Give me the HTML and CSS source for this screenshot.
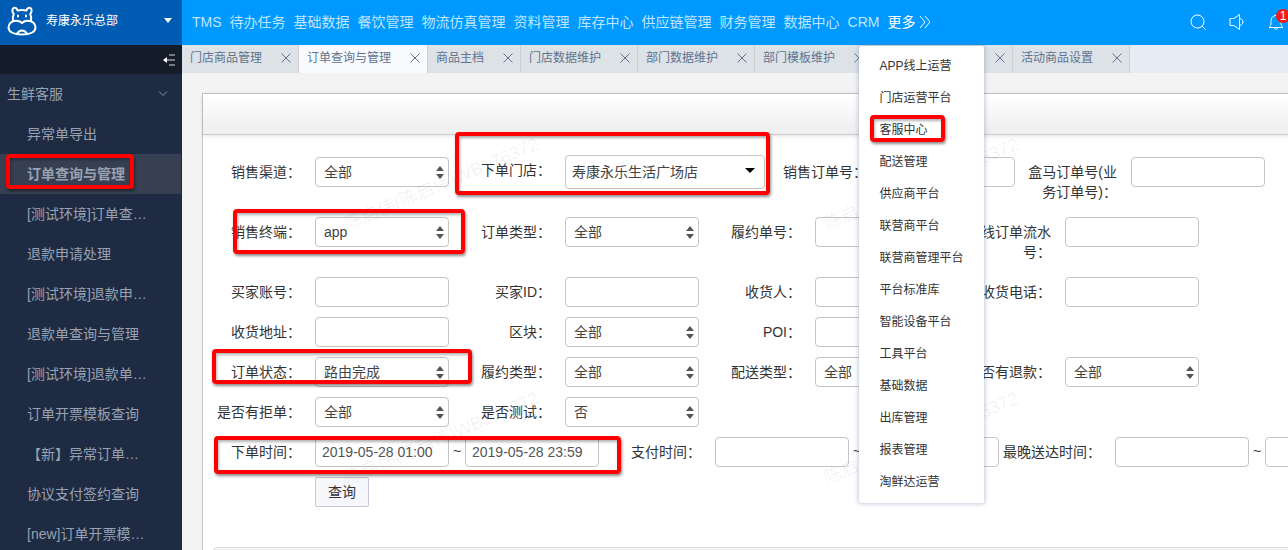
FILE: index.html
```html
<!DOCTYPE html>
<html lang="zh-CN">
<head>
    <meta charset="UTF-8">
    <meta name="viewport" content="width=device-width, initial-scale=1.0">
    <title>订单查询与管理</title>
    <link rel="stylesheet" href="styles.css">
</head>
<body>
    <header class="header">
        <button type="button" class="brand">
            <svg class="brand-logo" width="30" height="30" viewBox="0 0 30 30" fill="none" stroke="#fff" stroke-width="2" stroke-linecap="round" stroke-linejoin="round">
                <path d="M6 15c-.5-3-.3-5 .8-7C5 6.500 5 3 6.500 2c1.800-.8 3.500.3 4 2.500 3-.7 6-.7 9 0 .5-2.200 2.200-3.300 4-2.500C25 3 25 6.500 23.200 8c1.100 2 1.300 4 .8 7"/>
                <path d="M15 17c-1.500-1.500-3.500-2.200-6-2.200-4.500 0-7.500 3-7.500 6.700C1.500 26 7 28.500 15 28.500S28.500 26 28.500 21.500c0-3.700-3-6.700-7.500-6.700-2.500 0-4.500.7-6 2.200z"/>
                <path d="M10 27.500c1.500-2 3-3 5-3s3.500 1 5 3M11 9.500v1M19 9.500v1"/>
            </svg>
            <span class="brand-name">寿康永乐总部</span>
            <span class="brand-caret"></span>
        </button>
        <nav class="nav">
            <a href="#">TMS</a>
            <a href="#">待办任务</a>
            <a href="#">基础数据</a>
            <a href="#">餐饮管理</a>
            <a href="#">物流仿真管理</a>
            <a href="#">资料管理</a>
            <a href="#">库存中心</a>
            <a href="#">供应链管理</a>
            <a href="#">财务管理</a>
            <a href="#">数据中心</a>
            <a href="#">CRM</a>
            <div class="more">
                <a href="#" class="more-link">更多
                    <svg width="13" height="14" viewBox="0 0 13 14" fill="none" stroke="#fff" stroke-width="1"><path d="M1 1l5 6-5 6M6 1l5 6-5 6"/></svg>
                </a>
                <ul class="more-menu">
                    <li><a href="#">APP线上运营</a></li>
                    <li><a href="#">门店运营平台</a></li>
                    <li><a href="#">客服中心</a><span class="mark mark-service"></span></li>
                    <li><a href="#">配送管理</a></li>
                    <li><a href="#">供应商平台</a></li>
                    <li><a href="#">联营商平台</a></li>
                    <li><a href="#">联营商管理平台</a></li>
                    <li><a href="#">平台标准库</a></li>
                    <li><a href="#">智能设备平台</a></li>
                    <li><a href="#">工具平台</a></li>
                    <li><a href="#">基础数据</a></li>
                    <li><a href="#">出库管理</a></li>
                    <li><a href="#">报表管理</a></li>
                    <li><a href="#">淘鲜达运营</a></li>
                </ul>
            </div>
        </nav>
        <div class="tools">
            <button type="button" aria-label="搜索">
                <svg width="16" height="16" viewBox="0 0 16 16" fill="none" stroke="#fff" stroke-width="1"><circle cx="7.500" cy="7.500" r="6.500"/><path d="M12 12l3.500 3.500"/></svg>
            </button>
            <button type="button" aria-label="公告">
                <svg width="16" height="16" viewBox="0 0 16 16" fill="none" stroke="#fff" stroke-width="1" stroke-linejoin="round"><path d="M1 4.500h4l5.500-4v15l-5.500-4H1zM11 4.500c4 1.500 4 5.500 0 7"/></svg>
            </button>
            <button type="button" class="bell" aria-label="消息">
                <svg width="16" height="16" viewBox="0 0 16 16" fill="none" stroke="#fff" stroke-width="1" stroke-linejoin="round"><path d="M1 13.500h14c-1.500-1-2-2-2-6C13 4 11 1.500 8 1.500S3 4 3 7.500c0 4-.5 5-2 6zM6 13.500c.5 2.300 3.500 2.300 4 0"/></svg>
                <span class="badge">1</span>
            </button>
        </div>
    </header>

    <div class="layout">
        <aside class="sidebar">
            <button type="button" class="collapse" aria-label="收起菜单">
                <svg width="13" height="12" viewBox="0 0 13 12" fill="none" stroke="#d5d9e0" stroke-width="1.200"><path d="M6 1h6M3 6h9M6 11h6"/><path d="M4 3L0 6l4 3z" fill="#fff" stroke="none"/></svg>
            </button>
            <button type="button" class="group">生鲜客服
                <svg width="10" height="6" viewBox="0 0 10 6" fill="none" stroke="#8590a3" stroke-width="1"><path d="M1 .5l4 4 4-4"/></svg>
            </button>
            <ul class="menu">
                <li><a href="#">异常单导出</a></li>
                <li class="active"><a href="#">订单查询与管理</a><span class="mark mark-menu"></span></li>
                <li><a href="#">[测试环境]订单查…</a></li>
                <li><a href="#">退款申请处理</a></li>
                <li><a href="#">[测试环境]退款申…</a></li>
                <li><a href="#">退款单查询与管理</a></li>
                <li><a href="#">[测试环境]退款单…</a></li>
                <li><a href="#">订单开票模板查询</a></li>
                <li><a href="#">【新】异常订单…</a></li>
                <li><a href="#">协议支付签约查询</a></li>
                <li><a href="#">[new]订单开票模…</a></li>
            </ul>
        </aside>

        <main class="main">
            <svg class="defs" width="0" height="0"><symbol id="close" viewBox="0 0 12 12"><path d="M1.500 1.500l9 9M10.500 1.500l-9 9" fill="none" stroke="#5f7390" stroke-width="1"/></symbol></svg>
            <div class="tabs">
                <div class="tab"><a href="#">门店商品管理</a><button type="button" aria-label="关闭"><svg width="12" height="12"><use href="#close"/></svg></button></div>
                <div class="tab current"><a href="#">订单查询与管理</a><button type="button" aria-label="关闭"><svg width="12" height="12"><use href="#close"/></svg></button></div>
                <div class="tab"><a href="#">商品主档</a><button type="button" aria-label="关闭"><svg width="12" height="12"><use href="#close"/></svg></button></div>
                <div class="tab"><a href="#">门店数据维护</a><button type="button" aria-label="关闭"><svg width="12" height="12"><use href="#close"/></svg></button></div>
                <div class="tab"><a href="#">部门数据维护</a><button type="button" aria-label="关闭"><svg width="12" height="12"><use href="#close"/></svg></button></div>
                <div class="tab"><a href="#">部门模板维护</a><button type="button" aria-label="关闭"><svg width="12" height="12"><use href="#close"/></svg></button></div>
                <div class="tab tab-blank"><a href="#"></a><button type="button" aria-label="关闭"><svg width="12" height="12"><use href="#close"/></svg></button></div>
                <div class="tab"><a href="#">活动商品设置</a><button type="button" aria-label="关闭"><svg width="12" height="12"><use href="#close"/></svg></button></div>
            </div>

            <section class="panel">
                <div class="panel-head"></div>
                <form class="search">
                    <div class="row">
                        <div class="field">
                            <label for="channel">销售渠道：</label>
                            <div class="select"><select id="channel"><option>全部</option></select></div>
                        </div>
                        <div class="field field-store">
                            <label for="store">下单门店：</label>
                            <div class="combo"><select id="store"><option>寿康永乐生活广场店</option></select></div>
                            <span class="mark mark-store"></span>
                        </div>
                        <div class="field">
                            <label for="saleNo">销售订单号：</label>
                            <input type="text" id="saleNo">
                        </div>
                        <div class="field">
                            <label for="bizNo">盒马订单号(业务订单号)：</label>
                            <input type="text" id="bizNo">
                        </div>
                    </div>
                    <div class="row">
                        <div class="field">
                            <label for="terminal">销售终端：</label>
                            <div class="select"><select id="terminal"><option>app</option></select></div>
                            <span class="mark mark-terminal"></span>
                        </div>
                        <div class="field">
                            <label for="orderType">订单类型：</label>
                            <div class="select"><select id="orderType"><option>全部</option></select></div>
                        </div>
                        <div class="field">
                            <label for="fulfilNo">履约单号：</label>
                            <input type="text" id="fulfilNo">
                        </div>
                        <div class="field">
                            <label for="serialNo">离线订单流水号：</label>
                            <input type="text" id="serialNo">
                        </div>
                    </div>
                    <div class="row">
                        <div class="field">
                            <label for="buyer">买家账号：</label>
                            <input type="text" id="buyer">
                        </div>
                        <div class="field">
                            <label for="buyerId">买家ID：</label>
                            <input type="text" id="buyerId">
                        </div>
                        <div class="field">
                            <label for="receiver">收货人：</label>
                            <input type="text" id="receiver">
                        </div>
                        <div class="field">
                            <label for="phone">收货电话：</label>
                            <input type="text" id="phone">
                        </div>
                    </div>
                    <div class="row">
                        <div class="field">
                            <label for="address">收货地址：</label>
                            <input type="text" id="address">
                        </div>
                        <div class="field">
                            <label for="block">区块：</label>
                            <div class="select"><select id="block"><option>全部</option></select></div>
                        </div>
                        <div class="field">
                            <label for="poi">POI：</label>
                            <input type="text" id="poi">
                        </div>
                    </div>
                    <div class="row">
                        <div class="field">
                            <label for="status">订单状态：</label>
                            <div class="select"><select id="status"><option>路由完成</option></select></div>
                            <span class="mark mark-status"></span>
                        </div>
                        <div class="field">
                            <label for="fulfilType">履约类型：</label>
                            <div class="select"><select id="fulfilType"><option>全部</option></select></div>
                        </div>
                        <div class="field">
                            <label for="delivery">配送类型：</label>
                            <div class="select"><select id="delivery"><option>全部</option></select></div>
                        </div>
                        <div class="field">
                            <label for="refund">是否有退款：</label>
                            <div class="select"><select id="refund"><option>全部</option></select></div>
                        </div>
                    </div>
                    <div class="row">
                        <div class="field">
                            <label for="reject">是否有拒单：</label>
                            <div class="select"><select id="reject"><option>全部</option></select></div>
                        </div>
                        <div class="field">
                            <label for="test">是否测试：</label>
                            <div class="select"><select id="test"><option>否</option></select></div>
                        </div>
                    </div>
                    <div class="row">
                        <div class="field">
                            <label for="orderFrom">下单时间：</label>
                            <input type="text" id="orderFrom" value="2019-05-28 01:00">
                            <span class="to">~</span>
                            <input type="text" aria-label="下单时间止" value="2019-05-28 23:59">
                            <span class="mark mark-time"></span>
                        </div>
                        <div class="field">
                            <label for="payFrom">支付时间：</label>
                            <input type="text" id="payFrom">
                            <span class="to">~</span>
                            <input type="text" aria-label="支付时间止">
                        </div>
                        <div class="field">
                            <label for="arriveFrom">最晚送达时间：</label>
                            <input type="text" id="arriveFrom">
                            <span class="to">~</span>
                            <input type="text" aria-label="最晚送达时间止">
                        </div>
                    </div>
                    <div class="actions">
                        <button type="submit">查询</button>
                    </div>
                </form>
                <div class="result"></div>
                <div class="watermark" aria-hidden="true">
                    <span>陈启伟(陈启伟)WB176372</span>
                    <span>陈启伟(陈启伟)WB176372</span>
                    <span>陈启伟(陈启伟)WB176372</span>
                    <span>陈启伟(陈启伟)WB176372</span>
                </div>
            </section>
        </main>
    </div>
</body>
</html>
```
FILE: styles.css
```css
* {
    box-sizing: border-box;
}
body {
    display: flex;
    flex-direction: column;
    height: 100vh;
    margin: 0;
    overflow: hidden;
    background-color: #f3f3f3;
    color: #333;
    font-family: "Liberation Sans", "Noto Sans CJK SC", sans-serif;
    font-size: 14px;
    line-height: 20px;
}
button, input, select {
    margin: 0;
    font: inherit;
}
button {
    padding: 0;
    border: none;
    background: none;
    cursor: pointer;
}
a {
    color: inherit;
    text-decoration: none;
}
ul {
    margin: 0;
    padding: 0;
    list-style: none;
}
svg {
    display: block;
}

/* header */
.header {
    position: relative;
    z-index: 10;
    display: flex;
    flex: none;
    height: 45px;
    background-color: #09f;
}
.brand {
    display: flex;
    flex: none;
    align-items: center;
    width: 182px;
    padding: 0 10px 4px 7px;
    background-color: #005cb3;
    color: #fff;
    font-size: 12px;
}
.brand-name {
    margin-left: 9px;
}
.brand-caret {
    margin-left: auto;
    border: 4px solid transparent;
    border-top: 5px solid #fff;
    border-bottom: none;
}
.nav {
    display: flex;
    gap: 8px;
    padding-left: 10px;
    line-height: 44px;
    color: #bfe5ff;
    white-space: nowrap;
}
.more {
    position: relative;
}
.more-link {
    display: flex;
    align-items: center;
    gap: 4px;
    color: #fff;
}
.more-menu {
    position: absolute;
    top: 46px;
    left: -28px;
    width: 125px;
    padding: 4px 0 5px;
    border-radius: 2px;
    background-color: #fff;
    box-shadow: 0 0 4px 1px rgba(100, 125, 165, 0.4);
    color: #333;
    font-size: 12px;
    line-height: 32px;
}
.more-menu li {
    position: relative;
    padding-left: 20px;
}
.more-menu a {
    display: block;
}
.tools {
    display: flex;
    align-items: center;
    gap: 23px;
    margin-left: auto;
    padding: 0 4px 2px 0;
}
.bell {
    position: relative;
}
.badge {
    position: absolute;
    top: -5px;
    right: -6px;
    width: 14px;
    height: 14px;
    border-radius: 7px;
    background-color: #f21b0c;
    color: #fff;
    font-size: 12px;
    line-height: 14px;
    text-align: center;
}

.layout {
    display: flex;
    flex: 1;
    min-height: 0;
}

/* sidebar */
.sidebar {
    flex: none;
    width: 182px;
    overflow: hidden;
    background-color: #1e2b42;
    color: #98a2b3;
}
.collapse {
    display: flex;
    align-items: center;
    justify-content: flex-end;
    width: 100%;
    height: 29px;
    padding-right: 6px;
    background-color: #151d2b;
}
.group {
    display: flex;
    align-items: center;
    justify-content: space-between;
    width: 100%;
    height: 40px;
    padding: 0 14px 0 7px;
    color: inherit;
}
.menu li {
    position: relative;
    margin-right: 1px;
    padding-left: 27px;
    line-height: 40px;
    white-space: nowrap;
}
.menu a {
    display: block;
}
.menu .active {
    background-color: #364052;
    font-weight: bold;
}

/* tabs */
.main {
    flex: 1;
    min-width: 0;
    overflow: hidden;
}
.defs {
    position: absolute;
}
.tabs {
    display: flex;
    height: 28px;
    background-color: #e6ebf4;
}
.tab {
    display: flex;
    flex: none;
    align-items: center;
    gap: 18px;
    padding: 0 6px 2px 8px;
    border-right: 1px solid #cfcfd2;
    background-color: #dde2e6;
    color: #5f7390;
    font-size: 12px;
}
.tab.current {
    background-color: #f8fafd;
}
.tab-blank a {
    width: 96px;
}

/* search panel */
.panel {
    position: relative;
    min-width: 1300px;
    margin: 20px 0 0 20px;
    border: 1px solid #c4c4c4;
    background-color: #fff;
}
.panel-head {
    height: 41px;
    border-bottom: 1px solid #ccc;
    background: linear-gradient(#fff, #eee);
    box-shadow: 0 1px 4px rgba(0, 0, 0, 0.12);
}
.search {
    padding: 22px 0 40px;
}
.row {
    display: flex;
    gap: 4px;
    margin-bottom: 10px;
}
.field {
    position: relative;
    display: flex;
    flex: none;
    align-items: flex-start;
}
.field label {
    width: 112px;
    padding: 5px 14px 5px 0;
    text-align: right;
}
.field-store {
    margin-top: -2px;
}
.field input, .select, .combo {
    width: 134px;
    height: 30px;
    border: 1px solid #c4c4c4;
    border-radius: 4px;
    background-color: #fff;
    color: #555;
}
.field input {
    padding: 0 6px;
}
.select, .combo {
    position: relative;
}
.combo {
    width: 200px;
    height: 34px;
}
.field select {
    width: 100%;
    height: 100%;
    padding: 0 8px;
    border: none;
    background: none;
    color: #444;
    appearance: none;
}
.combo select {
    padding: 0 6px;
}
.select::before, .select::after, .combo::after {
    content: "";
    position: absolute;
    right: 4px;
    border: 4px solid transparent;
    pointer-events: none;
}
.select::before {
    top: 8px;
    border-top: none;
    border-bottom: 5px solid #555;
}
.select::after {
    bottom: 7px;
    border-bottom: none;
    border-top: 5px solid #555;
}
.combo::after {
    top: 12px;
    right: 9px;
    border: 5px solid transparent;
    border-top-color: #000;
    border-bottom: none;
}
.to {
    width: 16px;
    padding-top: 4px;
    text-align: center;
}
.actions {
    padding-left: 112px;
}
.actions button {
    display: block;
    width: 54px;
    height: 30px;
    border: 1px solid #c5c7dc;
    border-radius: 2px;
    background-color: #f6f7fb;
    color: #333;
}
.result {
    height: 200px;
    margin-left: 10px;
    border: 1px solid #ddd;
    border-radius: 4px;
    background-color: #f5f5f5;
}

/* user name repeated over the page */
.watermark {
    position: absolute;
    inset: 0;
    display: grid;
    grid-template-columns: 480px 480px;
    grid-auto-rows: 254px;
    padding: 121px 0 0 142px;
    overflow: hidden;
    color: rgba(0, 0, 0, 0.06);
    font-size: 18px;
    pointer-events: none;
}
.watermark span {
    transform: rotate(-23deg);
    transform-origin: left center;
    white-space: nowrap;
    height: 20px;
}

/* red highlight boxes */
.mark {
    position: absolute;
    z-index: 2;
    border: 4px solid #f00;
    border-radius: 4px;
    box-shadow: 1px 2px 3px rgba(0, 0, 0, 0.45), inset 1px 2px 3px rgba(0, 0, 0, 0.3);
    pointer-events: none;
}
.mark-service {
    top: 1px;
    left: 11px;
    width: 75px;
    height: 27px;
}
.mark-menu {
    top: 0;
    left: 6px;
    width: 128px;
    height: 35px;
}
.mark-store {
    top: -23px;
    left: 2px;
    width: 315px;
    height: 63px;
}
.mark-terminal {
    top: -8px;
    left: 30px;
    width: 232px;
    height: 45px;
}
.mark-status {
    top: -8px;
    left: 9px;
    width: 260px;
    height: 35px;
}
.mark-time {
    top: -1px;
    left: 11px;
    width: 407px;
    height: 38px;
}
```
